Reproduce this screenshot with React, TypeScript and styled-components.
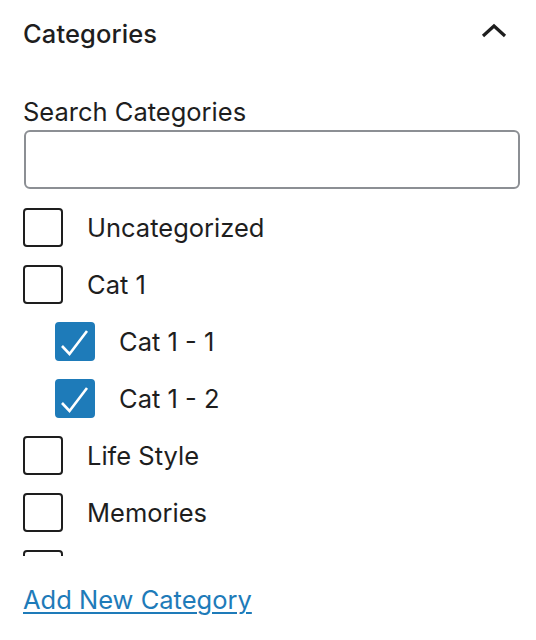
import styled, { createGlobalStyle } from "styled-components"

const GlobalStyle = createGlobalStyle`
    body {
        margin: 0;
        background: #fff;
        font-family: "Inter", "Noto Sans", sans-serif;
        color: #1e1e1e;
    }
`

interface Category {
    name: string;
    checked: boolean;
    child?: boolean;
}

// last row sits under the fold of the scroll box, only its box top shows
const categories: Category[] = [
    { name: "Uncategorized", checked: false },
    { name: "Cat 1", checked: false },
    { name: "Cat 1 - 1", checked: true, child: true },
    { name: "Cat 1 - 2", checked: true, child: true },
    { name: "Life Style", checked: false },
    { name: "Memories", checked: false },
    { name: "", checked: false },
]

export default function App() {
    return (
        <>
            <GlobalStyle />
            <Panel>
                <Header>
                    <Title>Categories</Title>
                    <Toggle aria-label="Collapse">
                        <svg width="28" height="16" viewBox="0 0 28 16">
                            <path d="M3 13 L14 3 L25 13" fill="none" stroke="#1e1e1e" strokeWidth="3.2" />
                        </svg>
                    </Toggle>
                </Header>
                <Label htmlFor="cat-search">Search Categories</Label>
                <SearchInput id="cat-search" type="text" />
                <List>
                    {categories.map((c, i) => (
                        <Row key={i} $child={c.child}>
                            <Box $checked={c.checked}>
                                {c.checked && (
                                    <svg width="36" height="36" viewBox="0 0 36 36">
                                        <path d="M5 22 L12.5 30 L30 7" fill="none" stroke="#fff" strokeWidth="2.6" />
                                    </svg>
                                )}
                            </Box>
                            {c.name && <RowText>{c.name}</RowText>}
                        </Row>
                    ))}
                </List>
                <AddLink href="#">Add New Category</AddLink>
            </Panel>
        </>
    )
}

const Panel = styled.div`
    width: 536px;
    height: 640px;
    box-sizing: border-box;
    padding: 0 16px 0 23px;
    display: flex;
    flex-direction: column;
`

const Header = styled.div`
    height: 66px;
    display: flex;
    align-items: center;
    justify-content: space-between;
`

const Title = styled.h2`
    margin: 0;
    font-size: 25.5px;
    font-weight: 500;
    letter-spacing: 0.1px;
`

const Toggle = styled.button`
    width: 48px;
    height: 48px;
    margin-right: 2px;
    padding: 0;
    border: none;
    background: none;
    display: flex;
    align-items: center;
    justify-content: center;
    margin-top: -4px;
`

const Label = styled.label`
    margin-top: 30px;
    font-size: 25.5px;
    line-height: 32px;
`

const SearchInput = styled.input`
    margin: 2px 0 0 1px;
    height: 59px;
    box-sizing: border-box;
    border: 2px solid #8c8f94;
    border-radius: 6px;
    font-size: 24px;
    padding: 0 12px;
    outline: none;
`

const List = styled.div`
    margin-top: 10px;
    height: 357px;
    overflow: hidden;
    flex-shrink: 0;
`

const Row = styled.div<{ $child?: boolean }>`
    height: 57px;
    display: flex;
    align-items: center;
    padding-left: ${(p) => (p.$child ? "32px" : "0")};
`

const Box = styled.span<{ $checked: boolean }>`
    width: 40px;
    height: 39px;
    box-sizing: border-box;
    border-radius: 4px;
    border: 2px solid ${(p) => (p.$checked ? "#1e7bb9" : "#1e1e1e")};
    background: ${(p) => (p.$checked ? "#1e7bb9" : "#fff")};
    display: flex;
    align-items: center;
    justify-content: center;
    flex-shrink: 0;
`

const RowText = styled.span`
    margin-left: 24px;
    font-size: 25.5px;
`

const AddLink = styled.a`
    margin-top: 28px;
    align-self: flex-start;
    font-size: 25.5px;
    line-height: 32px;
    color: #1e7bb9;
    text-decoration: underline;
    text-decoration-thickness: 2px;
    text-underline-offset: 3px;
`
